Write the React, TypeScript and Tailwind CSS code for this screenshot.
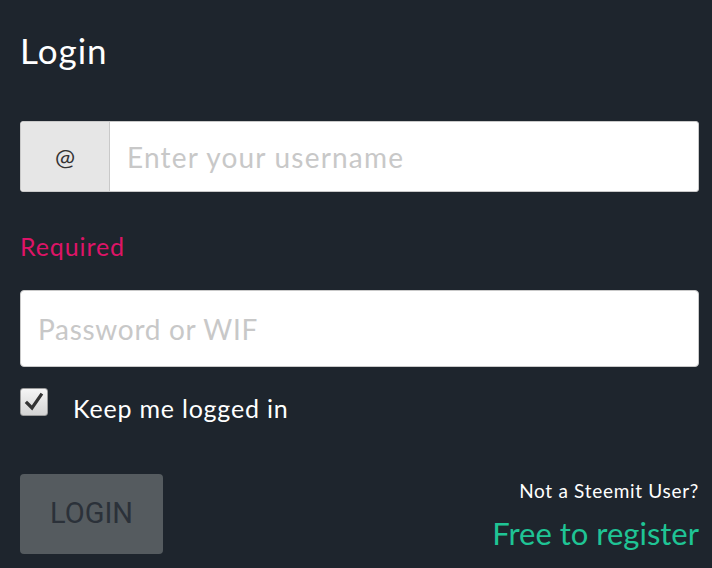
export default function App() {
  return (
    <div className="min-h-[568px] w-full bg-[#1e252d] pl-[20px] pr-[13px] pt-[26px] font-['Lato',sans-serif]">
      <h1 className="text-[35px] leading-[48px] tracking-[1px] text-white">Login</h1>

      {/* Username group */}
      <div className="mt-[47px] flex h-[71px] overflow-hidden rounded-[3px] border border-[#c9c9c9] bg-white">
        <div className="flex w-[89px] shrink-0 items-center justify-center border-r border-[#c9c9c9] bg-[#e6e6e6] text-[24px] text-[#333]">
          @
        </div>
        <input
          className="flex-1 px-[17px] text-[28px] tracking-[1.2px] text-[#333] outline-none placeholder:text-[#c8c8c8]"
          placeholder="Enter your username"
        />
      </div>

      <div className="mt-[34px] text-[25px] leading-[40px] tracking-[0.9px] text-[#de1467]">Required</div>

      <input
        className="mt-[24px] block h-[77px] w-full rounded-[4px] border border-[#c9c9c9] bg-white px-[17px] text-[28px] tracking-[0.7px] text-[#333] outline-none placeholder:text-[#c8c8c8]"
        placeholder="Password or WIF"
      />

      <label className="mt-[21px] flex items-start gap-[25px]">
        <span className="flex h-[28px] w-[28px] items-center justify-center rounded-[3px] border border-[#9a9a9a] bg-gradient-to-b from-[#f5f5f5] to-[#d4d4d4]">
          <svg width="20" height="20" viewBox="0 0 20 20">
            <path d="M3 11 L8 16 L17 3" fill="none" stroke="#333" strokeWidth="3.2" strokeLinecap="square" />
          </svg>
        </span>
        <span className="mt-[3px] text-[25px] leading-[34px] tracking-[0.8px] text-white">Keep me logged in</span>
      </label>

      <div className="mt-[49px] flex items-end justify-between">
        <button className="h-[80px] w-[143px] rounded-[4px] bg-[#555b5f] font-['Roboto',sans-serif] text-[29px] text-[#2b3139]">
          LOGIN
        </button>
        <div className="flex flex-col items-end pb-[2px]">
          <span className="text-[19px] leading-[28px] tracking-[0.7px] text-white">Not a Steemit User?</span>
          <a className="mt-[9px] text-[31px] leading-[38px] text-[#1fc495]">Free to register</a>
        </div>
      </div>
    </div>
  );
}
